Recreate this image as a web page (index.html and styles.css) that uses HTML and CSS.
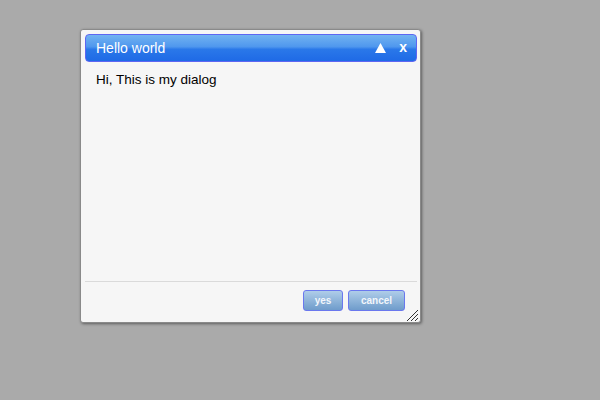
FILE: index.html
```html
<!DOCTYPE html>
<html>
<head>
<meta charset="utf-8">
<link rel="stylesheet" href="styles.css">
</head>
<body>
<div class="dialog">
  <div class="titlebar">
    <span class="title">Hello world</span>
    <span class="controls">
      <svg class="tri" width="11" height="10" viewBox="0 0 11 10"><polygon points="5.5,0 11,10 0,10" fill="#fff"/></svg>
      <span class="close">x</span>
    </span>
  </div>
  <div class="content">Hi, This is my dialog</div>
  <div class="buttonpane">
    <button class="btn">yes</button>
    <button class="btn">cancel</button>
  </div>
  <svg class="grip" width="12" height="12" viewBox="0 0 12 12">
    <path d="M1 12 L12 1 M5 12 L12 5 M9 12 L12 9" stroke="#333" stroke-width="1"/>
  </svg>
</div>
</body>
</html>
```
FILE: styles.css
```css
html, body {
  margin: 0;
  height: 100%;
  background: #aaaaaa;
  font-family: "Liberation Sans", Arial, sans-serif;
}
.dialog {
  position: absolute;
  left: 80px;
  top: 29px;
  width: 341px;
  height: 294px;
  box-sizing: border-box;
  background: #f6f6f6;
  border: 1px solid #8a8a8a;
  border-radius: 3px;
  padding: 4px 3px 0 4px;
  box-shadow: 1px 1px 3px rgba(0,0,0,0.45);
  display: flex;
  flex-direction: column;
}
.titlebar {
  height: 28px;
  box-sizing: border-box;
  border: 1px solid #5e66f2;
  border-radius: 4px;
  background: linear-gradient(#72b3f1 0%, #4f97ee 45%, #2a78e9 55%, #1f6ae6 100%);
  display: flex;
  align-items: center;
  justify-content: space-between;
  padding: 0 9px 0 10px;
  color: #fff;
}
.title {
  font-size: 14px;
}
.controls {
  display: flex;
  align-items: center;
  gap: 13px;
}
.tri {
  display: block;
  margin-top: -1px;
}
.close {
  font-weight: bold;
  font-size: 14px;
  line-height: 14px;
  margin-top: -2px;
}
.content {
  flex: 1;
  padding: 10px 11px;
  font-size: 13.5px;
  color: #000;
}
.buttonpane {
  border-top: 1px solid #dadada;
  display: flex;
  justify-content: flex-end;
  gap: 5px;
  padding: 8px 12px 11px 0;
}
.btn {
  height: 21px;
  box-sizing: border-box;
  border: 1px solid #6a78ee;
  border-radius: 3px;
  background: linear-gradient(#afcde9, #6f9ccb);
  color: #f2f6fb;
  font-family: "Liberation Sans", Arial, sans-serif;
  font-weight: bold;
  font-size: 10px;
  padding: 0;
  margin: 0;
}
.btn:first-child { width: 40px; }
.btn:last-child { width: 57px; }
.grip {
  position: absolute;
  right: 2px;
  bottom: 1px;
}
```
